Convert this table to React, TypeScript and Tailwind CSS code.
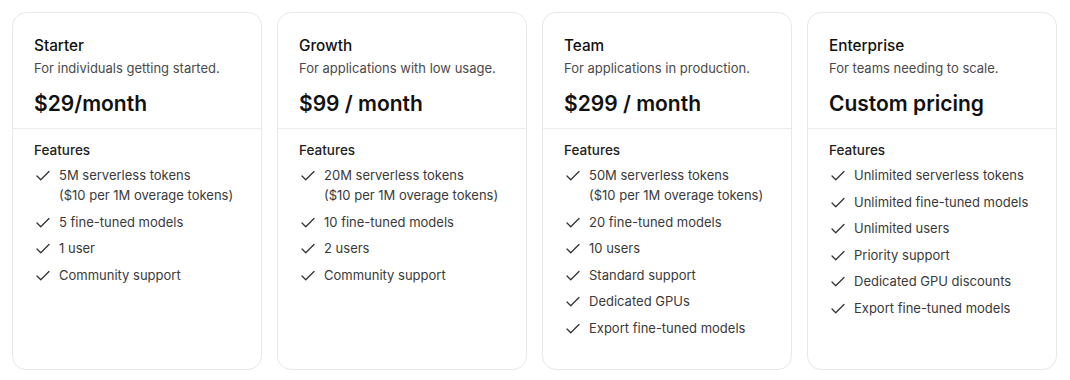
import { Check } from 'lucide-react';

type Plan = {
  name: string;
  blurb: string;
  price: string;
  features: string[][];
};

const PLANS: Plan[] = [
  {
    name: 'Starter',
    blurb: 'For individuals getting started.',
    price: '$29/month',
    features: [
      ['5M serverless tokens', '($10 per 1M overage tokens)'],
      ['5 fine-tuned models'],
      ['1 user'],
      ['Community support'],
    ],
  },
  {
    name: 'Growth',
    blurb: 'For applications with low usage.',
    price: '$99 / month',
    features: [
      ['20M serverless tokens', '($10 per 1M overage tokens)'],
      ['10 fine-tuned models'],
      ['2 users'],
      ['Community support'],
    ],
  },
  {
    name: 'Team',
    blurb: 'For applications in production.',
    price: '$299 / month',
    features: [
      ['50M serverless tokens', '($10 per 1M overage tokens)'],
      ['20 fine-tuned models'],
      ['10 users'],
      ['Standard support'],
      ['Dedicated GPUs'],
      ['Export fine-tuned models'],
    ],
  },
  {
    name: 'Enterprise',
    blurb: 'For teams needing to scale.',
    price: 'Custom pricing',
    features: [
      ['Unlimited serverless tokens'],
      ['Unlimited fine-tuned models'],
      ['Unlimited users'],
      ['Priority support'],
      ['Dedicated GPU discounts'],
      ['Export fine-tuned models'],
    ],
  },
];

function PlanCard({ plan }: { plan: Plan }) {
  return (
    <div className="flex flex-col rounded-[14px] border border-[#e8e8e8] bg-white">
      <div className="h-[116px] border-b border-[#ececec] px-[21px] pt-[23px]">
        <h3 className="text-[15.3px] leading-5 font-medium text-[#111]">{plan.name}</h3>
        <p className="mt-[2px] text-[13px] leading-5 text-[#4a4a4a]">{plan.blurb}</p>
        <p className="mt-[14px] text-[21px] leading-6 font-semibold text-[#111]">{plan.price}</p>
      </div>
      <div className="px-[21px] pt-[11px] pb-5">
        <h4 className="text-[13.5px] leading-5 font-medium text-[#222]">Features</h4>
        <ul className="mt-[5px] flex flex-col gap-[6.5px]">
          {plan.features.map((lines, i) => (
            <li key={i} className="flex items-start gap-[7px] text-[13px] leading-5 text-[#3a3a3a]">
              <Check size={18} strokeWidth={1.75} className="mt-[2px] shrink-0 text-[#333]" />
              <span>
                {lines.map((l, j) => (
                  <span key={j} className="block">
                    {l}
                  </span>
                ))}
              </span>
            </li>
          ))}
        </ul>
      </div>
    </div>
  );
}

export default function App() {
  return (
    <div
      className="min-h-[380px] bg-white pt-3 pl-3 pr-[13px]"
      style={{ fontFamily: 'Inter, "Noto Sans", sans-serif' }}
    >
      <div className="grid h-[358px] grid-cols-4 gap-[15px]">
        {PLANS.map((p) => (
          <PlanCard key={p.name} plan={p} />
        ))}
      </div>
    </div>
  );
}
